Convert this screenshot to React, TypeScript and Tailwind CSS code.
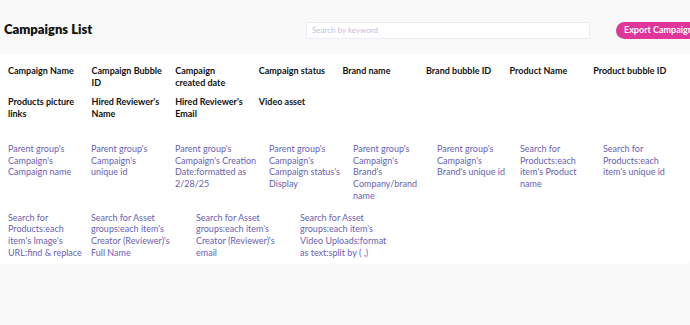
const headRow1 = [
  { text: "Campaign Name", w: "pr-[12px]" },
  { text: "Campaign Bubble ID", w: "pr-[12px]" },
  { text: "Campaign created date", w: "pr-[12px]" },
  { text: "Campaign status", w: "pr-[12px]" },
  { text: "Brand name", w: "pr-[12px]" },
  { text: "Brand bubble ID", w: "pr-[12px]" },
  { text: "Product Name", w: "pr-[12px]" },
  { text: "Product bubble ID", w: "w-[90px]" },
];
const headRow2 = ["Products picture links", "Hired Reviewer's Name", "Hired Reviewer's Email", "Video asset"];

const dataRow1 = [
  { text: "Parent group's Campaign's Campaign name", w: "w-[83px] pr-[11px]" },
  { text: "Parent group's Campaign's unique id", w: "w-[84px] pr-[12px]" },
  { text: "Parent group's Campaign's Creation Date:formatted as 2/28/25", w: "w-[94px] pr-[8px]" },
  { text: "Parent group's Campaign's Campaign status's Display", w: "w-[84px] pr-[8px]" },
  { text: "Parent group's Campaign's Brand's Company/brand name", w: "w-[84px] pr-[8px]" },
  { text: "Parent group's Campaign's Brand's unique id", w: "w-[83px] pr-[8px]" },
  { text: "Search for Products:each item's Product name", w: "w-[83px] pr-[8px]" },
  { text: "Search for Products:each item's unique id", w: "w-[83px] pr-[8px]" },
];

const dataRow2 = [
  { text: "Search for Products:each item's Image's URL:find & replace", w: "w-[83px] pr-[7px]" },
  { text: "Search for Asset groups:each item's Creator (Reviewer)'s Full Name", w: "w-[105px] pr-[21px]" },
  { text: "Search for Asset groups:each item's Creator (Reviewer)'s email", w: "w-[104px] pr-[20px]" },
  { text: "Search for Asset groups:each item's Video Uploads:format as text:split by ( ,)", w: "w-[104px] pr-[16px]" },
];

export default function App() {
  return (
    <div className="w-[690px] h-[325px] overflow-hidden bg-[#f9f9f9]" style={{ fontFamily: "Lato, 'Noto Sans', sans-serif" }}>
      {/* Top bar */}
      <div className="h-[54px] flex items-center pl-1 pt-[6px]">
        <h1 className="w-[302px] shrink-0 text-[13px] font-extrabold text-[#111]">Campaigns List</h1>
        <div className="w-[284px] h-[17px] shrink-0 bg-white border border-[#ececf2] rounded-[3px] flex items-center px-[5px]">
          <span className="text-[8px] text-[#c3bde0]">Search by keyword</span>
        </div>
        <button className="ml-[26px] shrink-0 w-[100px] h-[17px] rounded-full bg-[#e0359a] text-white text-[9px] font-bold text-left pl-[8px] whitespace-nowrap">
          Export Campaigns
        </button>
      </div>

      {/* Table panel */}
      <div className="bg-white rounded-b-[4px] h-[210px] pt-[11px] px-2">
        <div className="grid grid-cols-[repeat(7,83.6px)_90px] gap-y-[8px] text-[9px] leading-[11.5px] font-bold text-[#111]">
          {headRow1.map((h) => (
            <div key={h.text} className={h.w}>{h.text}</div>
          ))}
          {headRow2.map((h) => (
            <div key={h} className="pr-[12px]">{h}</div>
          ))}
        </div>

        <div className="mt-[24px] flex text-[9px] leading-[11.7px] text-[#6a5fb2]">
          {dataRow1.map((c) => (
            <div key={c.text} className={`${c.w} shrink-0`}>{c.text}</div>
          ))}
        </div>

        <div className="mt-[10px] flex text-[9px] leading-[11.7px] text-[#6a5fb2]">
          {dataRow2.map((c) => (
            <div key={c.text} className={`${c.w} shrink-0`}>{c.text}</div>
          ))}
        </div>
      </div>
    </div>
  );
}
